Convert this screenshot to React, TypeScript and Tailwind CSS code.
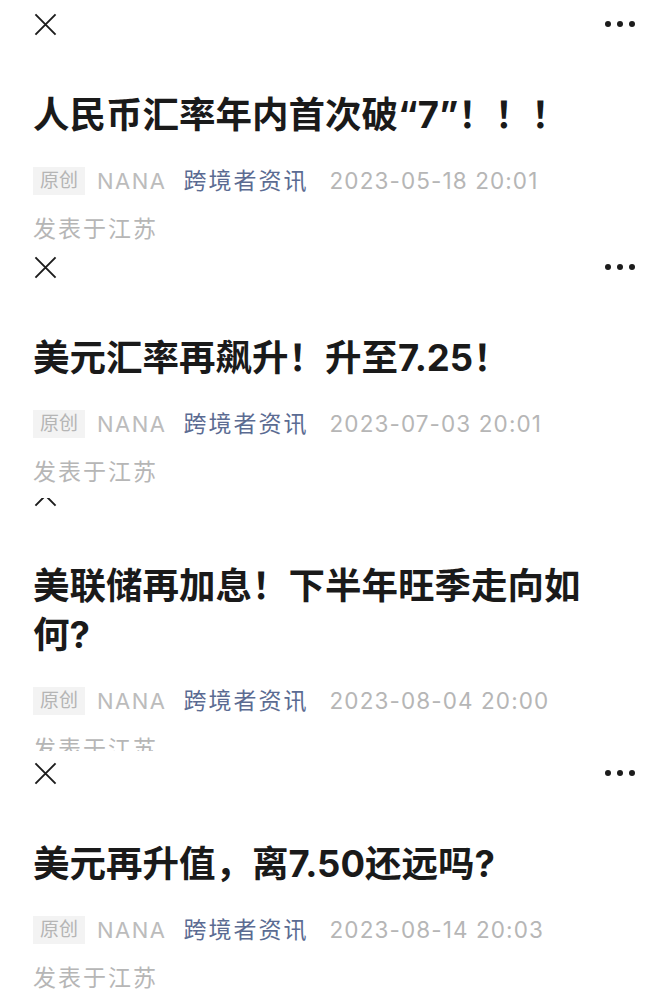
const cjk = { fontFamily: 'Inter, "Noto Sans CJK SC", sans-serif' };

type Post = {
  title: string;
  date: string;
  height: string;
  shift: string;
};

const posts: Post[] = [
  { title: "人民币汇率年内首次破“7”！！！", date: "2023-05-18 20:01", height: "h-[243px]", shift: "mt-0" },
  { title: "美元汇率再飙升！升至7.25！", date: "2023-07-03 20:01", height: "h-[255px]", shift: "mt-0" },
  { title: "美联储再加息！下半年旺季走向如何?", date: "2023-08-04 20:00", height: "h-[253px]", shift: "-mt-[27px]" },
  { title: "美元再升值，离7.50还远吗?", date: "2023-08-14 20:03", height: "h-[249px]", shift: "-mt-[2px]" },
];

function CloseIcon() {
  return (
    <svg width="23" height="23" viewBox="0 0 24 24" fill="none" stroke="#1c1c1c" strokeWidth="2">
      <path d="M1.5 1.5 22.5 22.5M22.5 1.5 1.5 22.5" />
    </svg>
  );
}

function MoreIcon() {
  return (
    <div className="flex items-center gap-[6px]">
      <span className="h-[6px] w-[6px] rounded-full bg-[#1c1c1c]" />
      <span className="h-[6px] w-[6px] rounded-full bg-[#1c1c1c]" />
      <span className="h-[6px] w-[6px] rounded-full bg-[#1c1c1c]" />
    </div>
  );
}

function PostHeader({ post }: { post: Post }) {
  return (
    <div className={`${post.height} overflow-hidden bg-white`}>
      <div className={post.shift}>
        {/* top bar */}
        <div className="flex h-[48px] items-center justify-between pl-[34px] pr-[31px]">
          <CloseIcon />
          <MoreIcon />
        </div>

        <div className="pl-[33px]">
          <h1 className="mt-[43px] max-w-[560px] text-[36.5px] font-bold leading-[49px] text-[#1a1a1a]">
            {post.title}
          </h1>

          {/* meta */}
          <div className="mt-[25px] flex h-[32px] items-center">
            <span className="mr-[12px] flex h-[28px] items-center bg-[#f3f3f3] px-[7px] text-[19px] text-[#b5b5b5]">
              原创
            </span>
            <span className="mr-[17px] text-[22px] tracking-[1.5px] text-[#bcbcbc]">NANA</span>
            <span className="mr-[21px] text-[23px] tracking-[2px] text-[#5b6b92]">跨境者资讯</span>
            <span className="text-[22.5px] tracking-[1.1px] text-[#b6b6b6]">{post.date}</span>
          </div>
          <div className="mt-[16px] h-[32px] text-[23px] leading-[32px] tracking-[2px] text-[#b6b6b6]">
            发表于江苏
          </div>
        </div>
      </div>
    </div>
  );
}

export default function App() {
  return (
    <div className="w-[666px] h-[1000px] overflow-hidden bg-white" style={cjk}>
      {posts.map((p) => (
        <PostHeader key={p.date} post={p} />
      ))}
    </div>
  );
}
